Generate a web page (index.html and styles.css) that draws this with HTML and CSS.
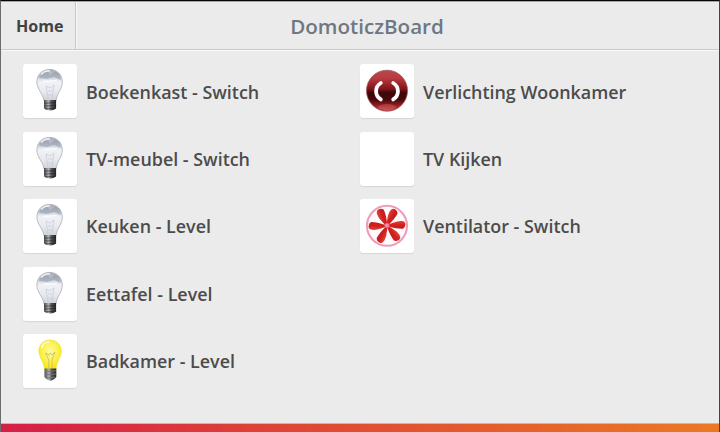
FILE: index.html
```
<!DOCTYPE html>
<html lang="nl">
<head>
<meta charset="utf-8">
<title>DomoticzBoard</title>
<link rel="stylesheet" href="styles.css">
</head>
<body>
<svg class="defs" aria-hidden="true">
  <defs>
    <linearGradient id="glass" x1="0" y1="0" x2="0" y2="1">
      <stop offset="0" stop-color="#a3a9b4"/><stop offset=".25" stop-color="#ced4de"/><stop offset=".4" stop-color="#f1f2f6"/><stop offset=".7" stop-color="#e8eaef"/><stop offset="1" stop-color="#cdd1d9"/>
    </linearGradient>
    <linearGradient id="metal">
      <stop offset="0" stop-color="#4a4a4c"/><stop offset=".38" stop-color="#b5b5b7"/><stop offset=".6" stop-color="#555558"/><stop offset="1" stop-color="#252527"/>
    </linearGradient>
    <radialGradient id="lit" cx=".5" cy=".4" r=".6">
      <stop offset="0" stop-color="#fdf9a0"/><stop offset=".5" stop-color="#fbf35c"/><stop offset="1" stop-color="#f5e60c"/>
    </radialGradient>
    <linearGradient id="ball" x1="0" y1="0" x2="0" y2="1">
      <stop offset="0" stop-color="#b8484c"/><stop offset=".2" stop-color="#b93a3f"/><stop offset=".46" stop-color="#80151a"/><stop offset=".55" stop-color="#3d0708"/><stop offset=".72" stop-color="#4a090a"/><stop offset=".88" stop-color="#9c2226"/><stop offset="1" stop-color="#c65458"/>
    </linearGradient>
    <linearGradient id="blade" x1="0" y1="0" x2="0" y2="1">
      <stop offset="0" stop-color="#d9463c"/><stop offset=".5" stop-color="#d5201c"/><stop offset="1" stop-color="#c01d20"/>
    </linearGradient>
    <symbol id="bulb-off" viewBox="0 0 54 54">
      <path d="M26.700 5.400C19 5.400 13.900 10.800 13.900 18C13.900 25.400 19.700 28.800 21 36.800H33C34 28.800 39.300 25.400 39.300 18C39.300 10.800 34 5.400 26.700 5.400Z" fill="url(#glass)" stroke="#a9adb5" stroke-width=".8"/>
      <path d="M16 14C17 9 21 7 25 8L27 11L32 7.500C37 9 38 12 37.700 16L31 13L24 15Z" fill="#8992a2" opacity=".5"/>
      <path d="M18 10.500Q22 6.200 27 7M20 17.500L34 16.500" fill="none" stroke="#fff" stroke-width="1.600" opacity=".75"/>
      <path d="M25 35L23 22L27 24L31 21L29 35M25 27H30M25 31H30" fill="none" stroke="#c5cad7" stroke-width=".7"/>
      <path d="M21 36H33.100V44.500Q31 46.600 27.200 46.600Q23 46.600 21 44.500Z" fill="url(#metal)"/>
      <path d="M21.200 39.200L33 38.700M21.400 42L33 41.600M22 44.800L32.500 44.400" stroke="#242426" stroke-width="1" opacity=".6"/>
    </symbol>
    <symbol id="bulb-on" viewBox="0 0 54 54">
      <path d="M27 6C20.300 6 15.900 11 15.900 17C15.900 23.500 20.500 26.500 21.500 35H33C33.600 26.500 38.300 23.500 38.300 17C38.300 11 33.800 6 27 6Z" fill="url(#lit)" stroke="#eee32c" stroke-width=".7"/>
      <path d="M18.500 14Q20 8 26 8" fill="none" stroke="#fffcd5" stroke-width="1.600"/>
      <path d="M25.800 35V26L22.500 19L26 21L27.500 19L29 21L32 18L29 26V35" fill="none" stroke="#cfc25a" stroke-width=".9"/>
      <path d="M21.500 34.500H33.300V43Q30 46.800 27 46.800Q23 46 21.500 43Z" fill="url(#metal)"/>
      <path d="M21.600 37.800L33.200 36.800M21.600 41L33.200 39.900M23 44.200L32 43.200" stroke="#77777d" stroke-width="1"/>
    </symbol>
    <path id="vane" d="M28 25.600C32 24.500 36 21.800 41.500 22Q45.400 22.300 45.400 25.500Q45.300 28.700 43 29.800Q38 30.200 28.500 27.600Z"/>
  </defs>
</svg>

<div class="board">
  <header class="topbar">
    <a class="home">Home</a>
    <h1 class="title">DomoticzBoard</h1>
  </header>
  <main class="devices">
    <ul class="column">
      <li class="device"><span class="tile"><svg class="icon"><use href="#bulb-off"/></svg></span><span class="name">Boekenkast - Switch</span></li>
      <li class="device"><span class="tile"><svg class="icon"><use href="#bulb-off"/></svg></span><span class="name">TV-meubel - Switch</span></li>
      <li class="device"><span class="tile"><svg class="icon"><use href="#bulb-off"/></svg></span><span class="name">Keuken - Level</span></li>
      <li class="device"><span class="tile"><svg class="icon"><use href="#bulb-off"/></svg></span><span class="name">Eettafel - Level</span></li>
      <li class="device"><span class="tile"><svg class="icon"><use href="#bulb-on"/></svg></span><span class="name">Badkamer - Level</span></li>
    </ul>
    <ul class="column">
      <li class="device"><span class="tile"><svg class="icon" viewBox="0 0 54 54">
        <circle cx="27" cy="26.700" r="20.500" fill="url(#ball)" stroke="#a25154" stroke-width=".8"/>
        <ellipse cx="27" cy="43" rx="9" ry="3" fill="#e2686c" opacity=".4"/>
        <path d="M20.800 19C14.500 22.900 14.500 31.400 20.800 35.400M33.200 19C39.500 22.900 39.500 31.400 33.200 35.400" fill="none" stroke="#fff" stroke-width="3.800" stroke-linecap="round"/>
      </svg></span><span class="name">Verlichting Woonkamer</span></li>
      <li class="device"><span class="tile"></span><span class="name">TV Kijken</span></li>
      <li class="device"><span class="tile"><svg class="icon" viewBox="0 0 54 54">
        <circle cx="27" cy="26.800" r="20" fill="#fffafc" stroke="#eb9dbb" stroke-width="2.100"/>
        <g fill="url(#blade)">
          <use href="#vane"/><use href="#vane" transform="rotate(54 27 26.800)"/><use href="#vane" transform="rotate(119 27 26.800)"/><use href="#vane" transform="rotate(183 27 26.800)"/><use href="#vane" transform="rotate(248 27 26.800)"/><use href="#vane" transform="rotate(300 27 26.800)"/>
        </g>
        <circle cx="27" cy="26.500" r="2.500" fill="#f08bab" stroke="#cf4961" stroke-width=".7"/>
      </svg></span><span class="name">Ventilator - Switch</span></li>
    </ul>
  </main>
  <footer class="stripe"></footer>
</div>
</body>
</html>
```

FILE: styles.css
```
* { box-sizing: border-box; }

body {
  margin: 0;
  font-family: "Open Sans", sans-serif;
  font-weight: 600;
  color: #4c4c4c;
}

.defs {
  position: absolute;
  width: 0;
  height: 0;
}

.board {
  display: flex;
  flex-direction: column;
  width: 720px;
  height: 432px;
  overflow: hidden;
  background: #ebebeb;
  border-top: 1px solid #050505;
  border-left: 1px solid #6c6c6c;
  border-right: 1px solid #444;
}

.topbar {
  display: grid;
  grid-template-columns: 76px 1fr 62px;
  height: 50px;
  flex: none;
  border-top: 1px solid #a5a5a5;
  border-bottom: 1px solid #fafafa;
  box-shadow: inset 0 -1px #cacaca;
}

.home {
  display: flex;
  align-items: center;
  padding-left: 15px;
  height: 47px;
  font-size: 16.1px;
  font-weight: 700;
  color: #424242;
  border-right: 1px solid #fafafa;
  box-shadow: inset -1px 0 #c6c6c6;
}

.title {
  margin: 0;
  font-size: 20.6px;
  font-weight: 600;
  line-height: 48px;
  text-align: center;
  color: #6d7883;
}

.devices {
  display: grid;
  grid-template-columns: 337px 337px;
  flex: 1;
  padding: 13.45px 0 0 22px;
}

.column {
  margin: 0;
  padding: 0;
  list-style: none;
}

.device {
  display: flex;
  align-items: center;
  gap: 9px;
  height: 54px;
  margin-bottom: 13.4px;
}

.tile {
  width: 54px;
  height: 54px;
  background: #fff;
  border-radius: 3px;
  box-shadow: 0 1px 1px #d6d6d6;
}

.icon {
  display: block;
  width: 54px;
  height: 54px;
}

.name {
  padding-top: 0.3px;
  font-size: 17.9px;
  line-height: 24px;
  white-space: nowrap;
}

.stripe {
  flex: none;
  height: 9px;
  border-top: 1px solid #c9b5b3;
  background: linear-gradient(90deg, #d51e48, #dd4037 34%, #e35d2d 67%, #ea7924);
}
```
